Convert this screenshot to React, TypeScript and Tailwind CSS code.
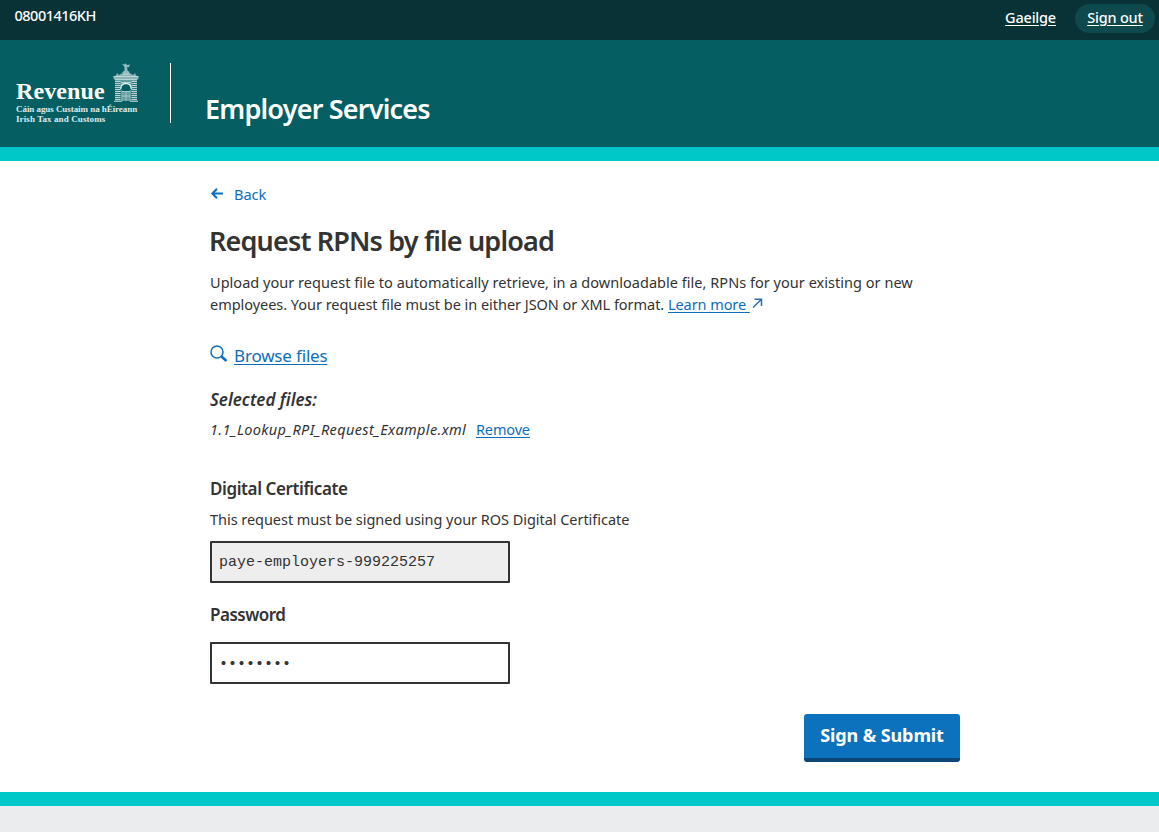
import React from "react";

function GateLogo() {
  return (
    <svg width="26" height="40" viewBox="0 0 26 40" fill="none" className="block">
      <path d="M9 .8l2 .8 1.500-1.300 1.500 1.700 3-.5-1 2.500-2 .3.500 3.200 2 1.500v3h-7v-3l2-1.500V4z" fill="#b5d2d3" opacity=".8" />
      <path d="M4 10l2 2 2.500-1.500h9L20 12l2-2 1 2.500 2.500 1V16H.5v-2.500l2.500-1z" fill="#b5d2d3" opacity=".75" />
      <path d="M2 16h22v2.500h-5.500V25c0-6-11-6-11 0v-6.500H2z" fill="#9fc4c6" opacity=".6" />
      <path d="M.5 13.500h25M1.500 16.500h23M8 19.500h10" stroke="#c9dfe0" strokeWidth=".8" />
      <g stroke="#c3dcdd" strokeWidth="1.100">
        <path d="M2 18.500h5.500M2 20.500h5.500M2 22.500h5.500M2 24.500h5.500M2 26.500h5.500M2 28.500h5.500M2 30.500h5.500M2 32.500h5.500M2 34.500h5.500M2 36.500h5.500M1 38.300h8" />
        <path d="M18.500 18.500H24M18.500 20.500H24M18.500 22.500H24M18.500 24.500H24M18.500 26.500H24M18.500 28.500H24M18.500 30.500H24M18.500 32.500H24M18.500 34.500H24M18.500 36.500H24M17 38.300h8" />
      </g>
      <path d="M2 18h6v20H2zM18 18h6v20h-6z" fill="#9fc4c6" opacity=".3" />
      <path d="M7.800 26q0-5.500 5.200-5.500t5.200 5.500" stroke="#e2eeee" strokeWidth="1.300" />
      <path d="M9 28h8v10H9z" fill="#c3dcdd" opacity=".5" />
      <path d="M8.800 38V27M17.200 38V27M13 38V29M9 28.500h8M9 33h8" stroke="#b5d2d3" strokeWidth=".8" />
    </svg>
  );
}

function TopBar() {
  return (
    <div className="flex h-10 items-start justify-between bg-[#083236] pl-[14.5px] pr-1 font-medium text-white">
      <span className="text-[14.5px] leading-[31px] tracking-[-0.5px]">08001416KH</span>
      <div className="flex pt-1 text-[14.5px] leading-[27px]">
        <a className="mr-[19px] underline underline-offset-2 tracking-[-0.2px]">Gaeilge</a>
        <a className="h-[29px] w-20 rounded-full bg-[#0d494d] text-center underline underline-offset-2 tracking-[-0.2px]">Sign out</a>
      </div>
    </div>
  );
}

function Header() {
  return (
    <header className="flex h-[121px] border-b-[14px] border-[#00c7c8] bg-[#045e62] text-white">
      <div className="w-[170px] pl-4 pt-[23px] font-['Liberation_Serif',serif] font-bold">
        <div className="flex items-start">
          <span className="w-[97px] pt-4 text-[24px] leading-[24px] tracking-[0.1px]">Revenue</span>
          <GateLogo />
        </div>
        <div className="pt-px text-[9px] leading-[10px] text-[#dcebeb]">
          <p className="tracking-[-0.06px]">Cáin agus Custaim na hÉireann</p>
          <p className="tracking-[0.1px]">Irish Tax and Customs</p>
        </div>
      </div>
      <div className="mt-[23px] h-[60px] w-px bg-white" />
      <h1 className="pl-[34px] pt-[49px] text-[27px] font-semibold leading-10 tracking-[-0.8px]">Employer Services</h1>
    </header>
  );
}

export default function App() {
  return (
    <div className="h-[832px] overflow-hidden whitespace-nowrap bg-white font-['Noto_Sans',sans-serif] text-[#333]">
      <TopBar />
      <Header />
      <main className="flex h-[631px] w-[960px] flex-col pl-[210px] text-[14.5px] leading-[22px]">
        <a className="mt-[21px] flex h-[24px] items-center text-[#0d6ebd]">
          <svg width="14" height="12" viewBox="0 0 14 12" fill="none" stroke="#0d6ebd" strokeWidth="2" className="mr-[10px]">
            <path d="M13 5.500H2.500M7 .8L2.300 5.500L7 10.200" />
          </svg>
          Back
        </a>
        <h2 className="-ml-px mt-[15px] text-[27px] font-semibold leading-10 tracking-[-0.83px]">Request RPNs by file upload</h2>
        <p className="mt-[10px] leading-[22px] tracking-[0.03px]">
          Upload your request file to automatically retrieve, in a downloadable file, RPNs for your existing or new
        </p>
        <p className="flex leading-[22px]">
          <span className="tracking-[-0.035px]">employees. Your request file must be in either JSON or XML format.&nbsp;</span>
          <a className="tracking-[-0.07px] text-[#0d6ebd] underline underline-offset-2">Learn more&nbsp;</a>
          <svg width="11" height="11" viewBox="0 0 11 11" fill="none" stroke="#2a6cb5" strokeWidth="1.500" className="ml-[2px] mt-[5px]">
            <path d="M1 9.500L9 1.800M2.500 1.300H9.500V8" />
          </svg>
        </p>
        <a className="mt-[28px] flex h-[26px] text-[17px] leading-[26px] text-[#0d6ebd]">
          <svg width="18" height="18" viewBox="0 0 18 18" fill="none" stroke="#0d6ebd" className="mr-[6px] mt-[2px]">
            <circle cx="7" cy="7" r="6" strokeWidth="1.500" />
            <path d="M11.500 11.500L16.500 16" strokeWidth="2.500" />
          </svg>
          <span className="tracking-[-0.17px] underline underline-offset-2">Browse files</span>
        </a>
        <h3 className="mt-[18px] text-[17px] font-semibold italic leading-[26px]">Selected files:</h3>
        <div className="mt-[4px] flex leading-[24px]">
          <span className="w-[266px] italic tracking-[0.37px]">1.1_Lookup_RPI_Request_Example.xml</span>
          <a className="tracking-[-0.15px] text-[#0d6ebd] underline underline-offset-2">Remove</a>
        </div>
        <h3 className="mt-[35px] text-[17px] font-semibold leading-[26px] tracking-[-0.4px]">Digital Certificate</h3>
        <p className="mt-[6px] tracking-[-0.04px]">This request must be signed using your ROS Digital Certificate</p>
        <input readOnly value="paye-employers-999225257" className="mt-[11px] h-[42px] w-[300px] shrink-0 rounded-[1px] border-2 border-[#333] bg-[#eee] px-[7px] pt-px font-['Liberation_Mono',monospace] text-[15px] outline-none" />
        <label className="mt-[19px] text-[17px] font-semibold leading-[26px] tracking-[-0.5px]">Password</label>
        <input type="password" readOnly value="password" className="mt-[14px] h-[42px] w-[300px] shrink-0 rounded-[1px] border-2 border-[#333] bg-white px-[7px] pt-[2px] font-['Liberation_Mono',monospace] text-[15px] outline-none" />
        <button className="mt-[30px] h-[48px] w-[156px] shrink-0 self-end rounded-[3px] border-b-4 border-[#0b4678] bg-[#0d72bd] pb-px text-[18px] font-bold leading-[43px] tracking-[-0.1px] text-white">
          Sign &amp; Submit
        </button>
      </main>
      <footer className="h-10 border-t-[14px] border-[#00c7c8] bg-[#ebecee]" />
    </div>
  );
}
